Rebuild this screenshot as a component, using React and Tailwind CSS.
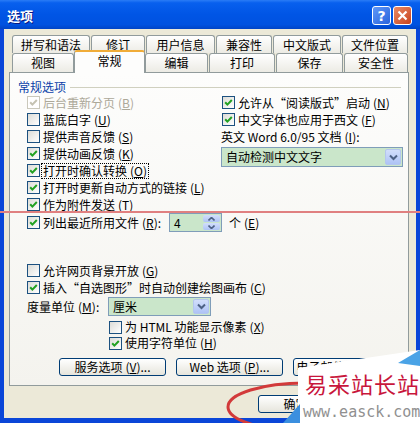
const Box = ({ checked, disabled, className = "" }) => (
  <span
    className={`w-[13px] h-[13px] shrink-0 border flex items-center justify-center ${
      disabled
        ? "border-[#cac8bb] bg-white"
        : "border-[#1c5180] bg-gradient-to-br from-[#dcdcd7] to-white"
    } ${className}`}
  >
    {checked && (
      <svg width="9" height="9" viewBox="0 0 9 9">
        <path
          d="M1.2 4.2 L3.4 6.6 L7.8 2"
          stroke={disabled ? "#c5c2b2" : "#21a121"}
          strokeWidth="2"
          fill="none"
        />
      </svg>
    )}
  </span>
);

// mnemonic key in brackets, letter underlined
const Mn = ({ k, tail = "" }) => (
  <span className="ml-[3px]">
    (<u className="underline-offset-1">{k}</u>){tail}
  </span>
);

function CheckRow({ label, k, checked, disabled, focus, h = "h-[17px]", className = "" }) {
  return (
    <div className={`flex items-center ${h} ${className}`}>
      <Box checked={checked} disabled={disabled} />
      <span
        className={`ml-[2px] px-px shrink-0 whitespace-nowrap ${disabled ? "text-[#aca899]" : ""} ${
          focus ? "outline outline-1 outline-dotted outline-black" : "outline-none"
        }`}
      >
        {label}
        <Mn k={k} />
      </span>
    </div>
  );
}

const Chevron = () => (
  <svg width="9" height="7" viewBox="0 0 9 7">
    <path d="M1 1.5 L4.5 5 L8 1.5" stroke="#4d6185" strokeWidth="2" fill="none" />
  </svg>
);

function Combo({ value, className = "" }) {
  return (
    <div className={`flex items-stretch shrink-0 border border-[#7f9db9] bg-[#cae6ca] ${className}`}>
      <span className="flex-1 pl-[4px] flex items-center whitespace-nowrap">{value}</span>
      <span className="w-[16px] m-px rounded-[2px] border border-[#b4c6ee] bg-gradient-to-b from-[#d2defb] to-[#aec3f5] flex items-center justify-center">
        <Chevron />
      </span>
    </div>
  );
}

function Spin({ value }) {
  return (
    <div className="flex items-stretch shrink-0 w-[53px] h-[19px] border border-[#7f9db9] bg-[#cae6ca]">
      <span className="flex-1 pl-[4px] flex items-center">{value}</span>
      <span className="w-[17px] m-px flex flex-col gap-px">
        <span className="flex-1 rounded-[2px] bg-gradient-to-b from-[#d2defb] to-[#aec3f5] flex items-center justify-center">
          <svg width="7" height="4" viewBox="0 0 7 4">
            <path d="M0.5 3.5 L3.5 0.5 L6.5 3.5" stroke="#4d6185" strokeWidth="1.6" fill="none" />
          </svg>
        </span>
        <span className="flex-1 rounded-[2px] bg-gradient-to-b from-[#d2defb] to-[#aec3f5] flex items-center justify-center">
          <svg width="7" height="4" viewBox="0 0 7 4">
            <path d="M0.5 0.5 L3.5 3.5 L6.5 0.5" stroke="#4d6185" strokeWidth="1.6" fill="none" />
          </svg>
        </span>
      </span>
    </div>
  );
}

const XpButton = ({ children, className = "" }) => (
  <div
    className={`h-[18px] shrink-0 rounded-[3px] border border-[#003c74] bg-gradient-to-b from-white to-[#e6e5dc] flex items-center justify-center whitespace-nowrap ${className}`}
  >
    {children}
  </div>
);

const Tab = ({ children, w, className = "" }) => (
  <div
    className={`${w} h-full shrink-0 rounded-t-[3px] border border-b-0 border-[#919b9c] bg-gradient-to-b from-white to-[#ecebe4] flex items-center justify-center whitespace-nowrap ${className}`}
  >
    {children}
  </div>
);

export default function App() {
  return (
    <div className="relative w-[420px] h-[423px] overflow-hidden bg-[#0a46d8] font-['Noto_Sans_CJK_SC',sans-serif] text-[12px] leading-[14px] text-black">
      {/* title bar */}
      <div className="h-[29px] flex items-start pt-[6px] pl-[7px] pr-[8px] bg-[linear-gradient(180deg,#2a7cf6_0%,#0860ee_10%,#0055e5_50%,#0052e0_85%,#0044c6_100%)]">
        <span className="flex-1 pt-px text-white font-bold text-[13px] leading-[18px] [text-shadow:1px_1px_#0a1883]">
          选项
        </span>
        <div className="w-[19px] h-[19px] rounded-[3px] border border-white bg-gradient-to-br from-[#5f98f8] to-[#2a62dc] flex items-center justify-center text-white font-bold text-[14px] leading-none font-['DejaVu_Sans',sans-serif]">
          ?
        </div>
        <div className="ml-[2px] w-[19px] h-[19px] rounded-[3px] border border-white bg-gradient-to-br from-[#e98a64] to-[#c7401a] flex items-center justify-center">
          <svg width="11" height="11" viewBox="0 0 11 11">
            <path d="M1.5 1.5 L9.5 9.5 M9.5 1.5 L1.5 9.5" stroke="white" strokeWidth="2.2" />
          </svg>
        </div>
      </div>

      {/* dialog body */}
      <div className="mx-[4px] h-[389px] bg-[#ece9d8] pt-[6px] flex flex-col">
        {/* tabs */}
        <div className="pl-[8px]">
          <div className="flex h-[18px] gap-px">
            <Tab w="w-[78px]">拼写和语法</Tab>
            <Tab w="w-[54px]">修订</Tab>
            <Tab w="w-[69px]">用户信息</Tab>
            <Tab w="w-[56px]">兼容性</Tab>
            <Tab w="w-[68px]">中文版式</Tab>
            <Tab w="w-[66px]">文件位置</Tab>
          </div>
          <div className="flex h-[19px] items-end">
            <Tab w="w-[62px]">视图</Tab>
            <div className="relative z-10 w-[71px] h-[23px] mb-[-1px] shrink-0 rounded-t-[3px] border border-b-0 border-[#919b9c] border-t-2 border-t-[#f0ac38] bg-[#fdfdfc] flex items-start justify-center pt-[2px]">
              常规
            </div>
            <Tab w="w-[63px]">编辑</Tab>
            <Tab w="w-[66px]" className="ml-px">打印</Tab>
            <Tab w="w-[67px]" className="ml-px">保存</Tab>
            <Tab w="w-[64px]" className="ml-px">安全性</Tab>
          </div>
        </div>

        {/* tab page */}
        <div className="ml-[5px] w-[400px] h-[314px] border border-[#919b9c] bg-[linear-gradient(180deg,#fdfdfc,#f4f3ee)] flex flex-col">
          <div className="flex items-center h-[21px] pt-[7px] pl-[8px] pr-[7px]">
            <span className="text-[#0b3fa8] whitespace-nowrap">常规选项</span>
            <span className="ml-[4px] flex-1 h-px bg-[#d0d0bf]" />
          </div>

          <div className="flex">
            <div className="w-[211px] shrink-0 pl-[17px] flex flex-col">
              <CheckRow label="后台重新分页" k="B" checked disabled />
              <CheckRow label="蓝底白字" k="U" />
              <CheckRow label="提供声音反馈" k="S" />
              <CheckRow label="提供动画反馈" k="K" checked />
              <CheckRow label="打开时确认转换" k="O" checked focus />
              <CheckRow label="打开时更新自动方式的链接" k="L" checked />
              <CheckRow label="作为附件发送" k="T" checked />
              <div className="flex items-center h-[19px] w-[260px]">
                <Box checked />
                <span className="ml-[2px] px-px w-[127px] shrink-0 whitespace-nowrap">
                  列出最近所用文件
                  <Mn k="R" tail=":" />
                </span>
                <Spin value="4" />
                <span className="ml-[7px] shrink-0 whitespace-nowrap">
                  个<Mn k="E" />
                </span>
              </div>
            </div>
            <div className="flex flex-col">
              <CheckRow label="允许从“阅读版式”启动" k="N" checked className="ml-px" />
              <CheckRow label="中文字体也应用于西文" k="F" checked className="ml-px" />
              <div className="h-[17px] flex items-center whitespace-nowrap">
                英文 Word 6.0/95 文档
                <Mn k="I" tail=":" />
              </div>
              <Combo value="自动检测中文文字" className="mt-[2px] w-[182px] h-[20px]" />
            </div>
          </div>

          <div className="pl-[17px] pt-[30px] flex flex-col">
            <CheckRow label="允许网页背景开放" k="G" />
            <CheckRow label="插入“自选图形”时自动创建绘图画布" k="C" checked />
            <div className="mt-px flex items-center h-[19px]">
              <span className="w-[81px] shrink-0 whitespace-nowrap">
                度量单位
                <Mn k="M" tail=":" />
              </span>
              <Combo value="厘米" className="w-[103px] h-[19px]" />
            </div>
            <div className="pl-[82px] mt-[3px]">
              <CheckRow label="为 HTML 功能显示像素" k="X" h="h-[16px]" />
              <CheckRow label="使用字符单位" k="H" checked h="h-[16px]" />
            </div>
          </div>

          <div className="mt-[7px] pl-[49px] flex gap-[10px]">
            <XpButton className="w-[107px]">
              服务选项<Mn k="V" tail="..." />
            </XpButton>
            <XpButton className="w-[107px]">
              Web 选项<Mn k="P" tail="..." />
            </XpButton>
            <XpButton className="w-[107px]">
              电子邮件选项<Mn k="E" tail="..." />
            </XpButton>
          </div>
        </div>

        {/* dialog button, mostly hidden under the watermark */}
        <div className="mt-[9px] pl-[254px] flex">
          <XpButton className="w-[75px] h-[18px]">确定</XpButton>
        </div>
      </div>

      {/* annotation: red guide line */}
      <div className="absolute left-0 top-[211px] w-full h-[2px] bg-[#e08080]" />

      {/* annotation: red ellipse round the OK button */}
      <svg className="absolute left-[220px] top-[376px]" width="200" height="47" viewBox="0 0 200 47">
        <ellipse cx="85" cy="31" rx="77" ry="24" fill="none" stroke="#d23a3a" strokeWidth="3" />
      </svg>

      {/* site watermark */}
      <div className="absolute left-[280px] top-[348px] w-[140px] h-[75px]">
        <svg className="absolute inset-0" width="140" height="75" viewBox="0 0 140 75">
          <polygon points="18,20 140,2 140,75 18,75" fill="white" />
          <polygon points="118,15 140,2 140,18" fill="#4aa3e6" />
          <polygon points="3,75 20,56 20,75" fill="#3b8fdf" />
        </svg>
        <div className="absolute left-[25px] top-[20px] text-[22px] leading-[30px] tracking-[1px] text-[#c8163c] whitespace-nowrap">
          易采站长站
        </div>
        <div className="absolute left-[23px] top-[55px] font-['DejaVu_Sans_Mono',monospace] text-[15px] leading-[18px] text-[#909090] whitespace-nowrap">
          www.easck.com
        </div>
      </div>
    </div>
  );
}
